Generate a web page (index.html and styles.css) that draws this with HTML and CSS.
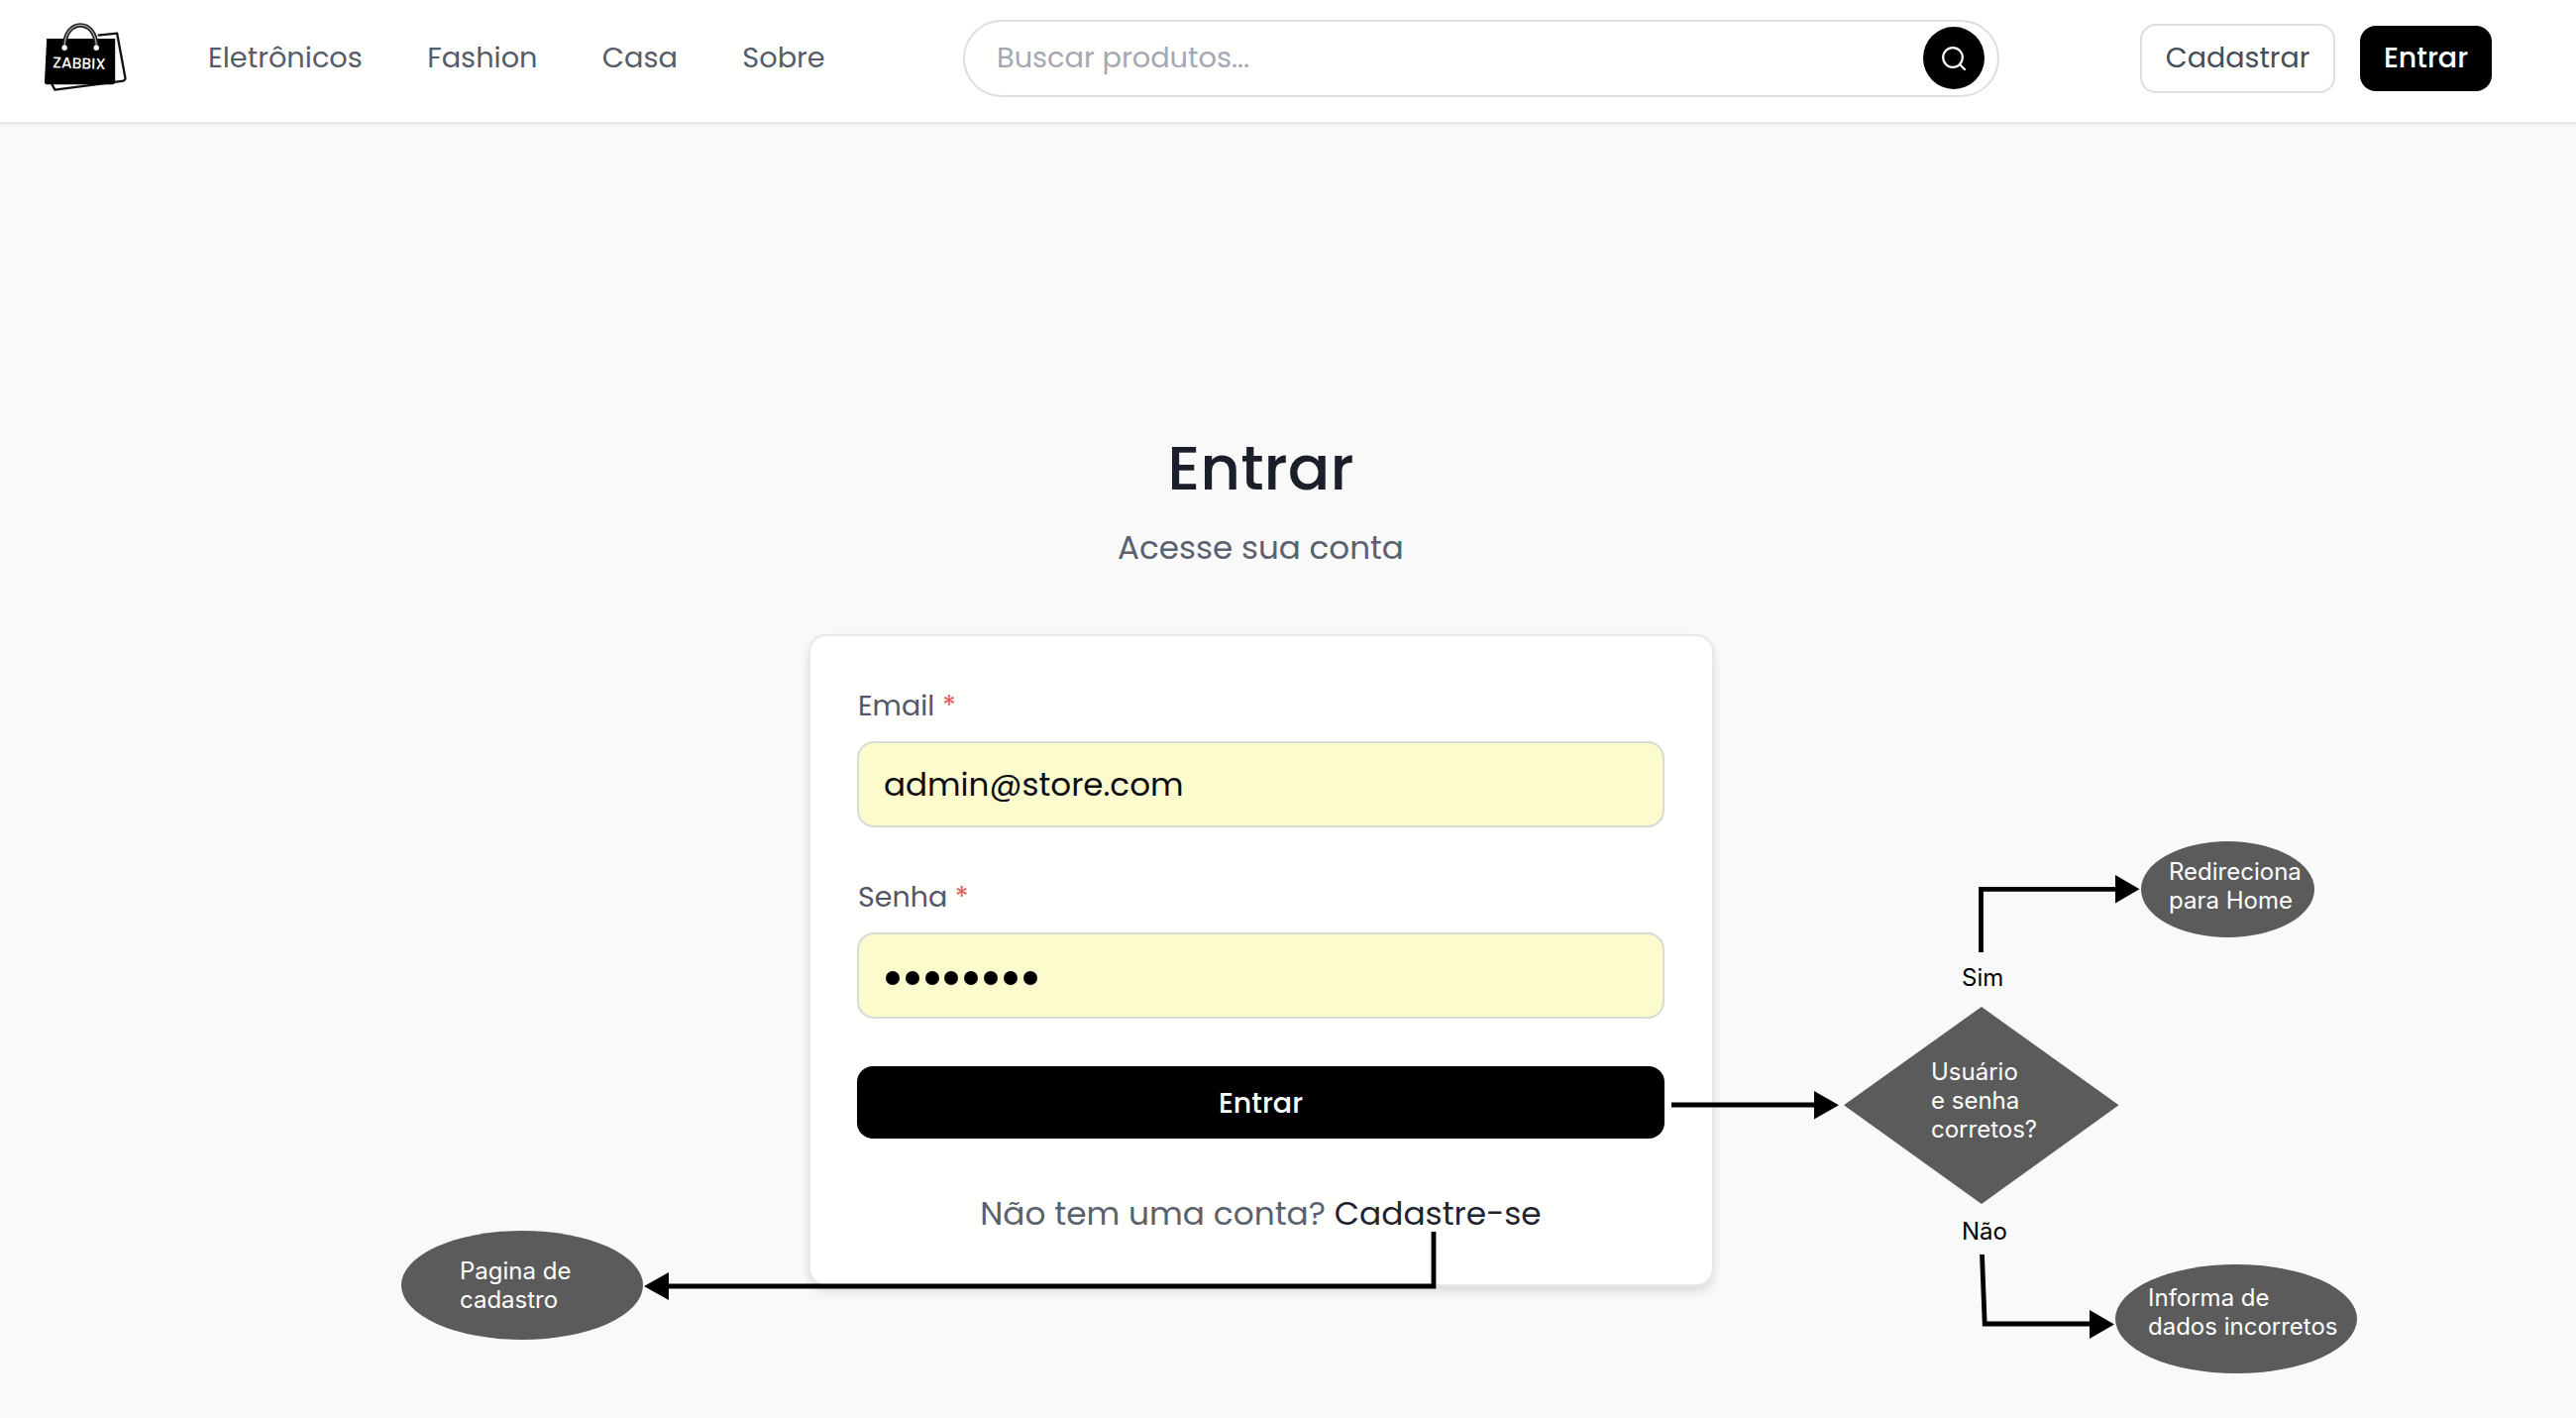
FILE: index.html
```html
<!DOCTYPE html>
<html lang="pt-BR">
<head>
<meta charset="utf-8">
<title>Entrar</title>
<link rel="stylesheet" href="styles.css">
</head>
<body>
<header class="header">
  <svg class="logo" viewBox="0 0 90 74" width="88" height="72">
    <path d="M56 13 L76 11 L84.500 57 Q85 60 81 60.500 L11.500 69.500 L8 63" fill="none" stroke="#111" stroke-width="2.4" stroke-linejoin="round"/>
    <path d="M3 16.500 H74 V61 Q74 64 71 64 H3.500 Q.5 64 .8 61 Z" fill="#000"/>
    <g fill="none"><path d="M21.500 25 C21.500 -5 54.500 -5 54.500 25" stroke="#222" stroke-width="4.600"/><path d="M21.500 25 C21.500 -5 54.500 -5 54.500 25" stroke="#aaa" stroke-width="1.200"/></g>
    <circle cx="21.500" cy="26" r="2.800" fill="#fff"/><circle cx="54.500" cy="26" r="2.800" fill="#fff"/>
    <text class="logo-text" x="9" y="46.500" textLength="55" transform="rotate(2 10 46)">ZABBIX</text>
  </svg>
  <nav class="nav">
    <a>Eletrônicos</a><a>Fashion</a><a>Casa</a><a>Sobre</a>
  </nav>
  <div class="search">
    <span class="search-hint">Buscar produtos...</span>
    <span class="search-button"><svg width="30" height="30" viewBox="0 0 30 30" fill="none" stroke="#fff" stroke-width="2.2" stroke-linecap="round"><circle cx="14" cy="14" r="9.8"/><path d="M21 21 L26 26"/></svg></span>
  </div>
  <div class="actions">
    <a class="btn-outline">Cadastrar</a>
    <a class="btn-dark">Entrar</a>
  </div>
</header>
<main class="main">
  <h1 class="title">Entrar</h1>
  <p class="subtitle">Acesse sua conta</p>
  <form class="card">
    <div class="label">Email <span class="star">*</span></div>
    <div class="field">admin@store.com</div>
    <div class="label">Senha <span class="star">*</span></div>
    <div class="field dots"><i></i><i></i><i></i><i></i><i></i><i></i><i></i><i></i></div>
    <div class="submit">Entrar</div>
    <p class="signup">Não tem uma conta? <a>Cadastre-se</a></p>
  </form>
</main>
<svg class="flow" viewBox="0 0 2600 1431" width="2600" height="1431">
  <g class="line"><path d="M1687 1115H1833"/><path d="M1447 1243V1298H673"/><path d="M1999.500 961V897.300H2137"/><path d="M2000.500 1266L2003.200 1336H2111"/></g>
  <g class="head"><path d="M1831 1101L1856 1115.300L1831 1129.500Z"/><path d="M675 1284L650 1298L675 1312Z"/><path d="M2135 883L2159.500 897.300L2135 911.500Z"/><path d="M2109 1322L2134 1336.500L2109 1351Z"/></g>
  <g class="shape"><ellipse cx="527" cy="1297" rx="122" ry="55"/><ellipse cx="2248.500" cy="897.500" rx="87.500" ry="48.500"/><ellipse cx="2257" cy="1331" rx="122" ry="55"/><path d="M2000 1016L2138.500 1115.300L2000 1215L1861 1115.300Z"/></g>
  <g class="note">
    <text x="464" y="1291">Pagina de</text><text x="464" y="1320">cadastro</text>
    <text x="2189" y="888">Redireciona</text><text x="2189" y="917">para Home</text>
    <text x="1949" y="1090">Usuário</text><text x="1949" y="1119">e senha</text><text x="1949" y="1148">corretos?</text>
    <text x="2168" y="1318">Informa de</text><text x="2168" y="1347">dados incorretos</text>
    <text class="dark" x="1980" y="995">Sim</text><text class="dark" x="1980" y="1251">Não</text>
  </g>
</svg>
</body>
</html>
```
FILE: styles.css
```css
* { box-sizing: border-box; }
body { margin: 0; width: 2600px; height: 1431px; overflow: hidden; background: #f9f9fa; font-family: Poppins, Inter, sans-serif; font-size: 28.5px; position: relative; white-space: nowrap; }
.header { height: 125px; padding: 0 85px 6px 44px; display: flex; align-items: center; background: #fffffe; border-bottom: 2px solid #e5e7eb; box-shadow: 0 2px 4px rgba(0,0,0,.05); }
.logo { flex: none; }
.logo-text { font: 500 16px Poppins, sans-serif; fill: #fff; }
.nav { display: flex; gap: 65.3px; margin-left: 78px; width: 762px; font-size: 28.8px; color: #565d6a; }
.search { width: 1046px; height: 78px; border: 2px solid #dcdee4; border-radius: 39px; display: flex; align-items: center; justify-content: space-between; padding: 0 13px 0 32px; font-size: 28.8px; color: #a3a8b3; }
.search-button { width: 62px; height: 63px; border-radius: 50%; background: #000; display: flex; align-items: center; justify-content: center; }
.actions { margin-left: auto; display: flex; align-items: center; gap: 25px; }
.btn-outline, .btn-dark { display: flex; align-items: center; justify-content: center; border-radius: 16px; }
.btn-outline { width: 197px; height: 70px; border: 2px solid #dcdee4; color: #474d5b; }
.btn-dark { width: 133px; height: 66px; background: #000; color: #fff; font-weight: 500; }
.main { width: 914px; margin-left: 815.5px; padding-top: 307px; display: flex; flex-direction: column; }
.title { margin: 0; font-size: 63px; line-height: 80px; font-weight: 500; color: #1b1f2b; text-align: center; }
.subtitle { margin: 21px 0 0; font-size: 32.6px; line-height: 40px; color: #5a616e; text-align: center; }
.card { margin-top: 67px; height: 658px; padding: 50px 47.5px 0; background: #fffffe; border: 2px solid #e6e8ee; border-radius: 18px; box-shadow: 0 8px 12px -2px rgba(0,0,0,.1), 0 2px 8px rgba(0,0,0,.04); }
.label { height: 40px; line-height: 40px; padding-left: 1px; color: #515766; margin-bottom: 16px; }
.star { color: #dc5f5a; }
.field { height: 87px; padding: 0 25px; border: 2px solid #d8dad8; border-radius: 17px; background: #fcfbcd; display: flex; align-items: center; font-size: 32.6px; color: #0c0c10; margin-bottom: 50px; }
.dots { gap: 5.8px; padding-left: 27px; margin-bottom: 48px; }
.dots i { width: 14px; height: 14px; border-radius: 50%; background: #000; margin-top: 4px; }
.submit { height: 73px; padding-top: 1px; border-radius: 16px; background: #000; color: #fff; font-weight: 500; display: flex; align-items: center; justify-content: center; }
.signup { margin: 56px 0 0; font-size: 32.8px; line-height: 40px; text-align: center; color: #5a616e; }
.signup a { color: #1f2430; }
.flow { position: absolute; left: 0; top: 0; }
.line { fill: none; stroke: #000; stroke-width: 4.8; }
.shape { fill: #5b5b5b; }
.note { font-family: Inter, sans-serif; font-size: 24px; fill: #fff; }
.note .dark { fill: #000; }
```
